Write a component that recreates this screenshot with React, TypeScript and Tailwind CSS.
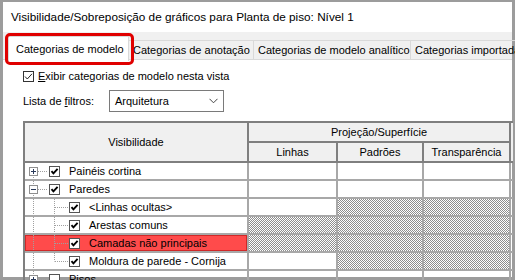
const font = "font-['Segoe_UI','Liberation_Sans',Arial,sans-serif]"

const hatch =
  "bg-[repeating-conic-gradient(#8e8e8e_0%_25%,#ffffff_0%_50%)] bg-[length:2px_2px]"

type Row = {
  label: string
  level: 0 | 1
  expander?: "+" | "-"
  checked: boolean
  hatch: [boolean, boolean, boolean]
  red?: boolean
  lastChild?: boolean
  first?: boolean
}

const rows: Row[] = [
  { label: "Painéis cortina", level: 0, expander: "+", checked: true, hatch: [false, false, false], first: true },
  { label: "Paredes", level: 0, expander: "-", checked: true, hatch: [false, false, false] },
  { label: "<Linhas ocultas>", level: 1, checked: true, hatch: [false, true, true] },
  { label: "Arestas comuns", level: 1, checked: true, hatch: [true, true, true] },
  { label: "Camadas não principais", level: 1, checked: true, hatch: [true, true, true], red: true },
  { label: "Moldura de parede - Cornija", level: 1, checked: true, hatch: [false, true, true], lastChild: true },
  { label: "Pisos", level: 0, expander: "+", checked: false, hatch: [false, false, false] },
]

const TreeCheck = ({ checked }: { checked: boolean }) => (
  <svg width="11" height="11" viewBox="0 0 11 11" className="shrink-0">
    <rect x="0.5" y="0.5" width="10" height="10" fill="#fff" stroke="#555" />
    {checked && (
      <path d="M2.5 5.2 L4.4 7.3 L8.6 2.8" fill="none" stroke="#000" strokeWidth="1.9" />
    )}
  </svg>
)

const TreeLines = ({ row }: { row: Row }) => {
  const dot = { stroke: "#a0a0a0", strokeDasharray: "1 1" }
  if (row.level === 0) {
    return (
      <svg width="24" height="16" viewBox="0 0 24 16" className="shrink-0">
        <line x1="8.5" y1={row.first ? 8 : 0} x2="8.5" y2="16" {...dot} />
        <line x1="13" y1="8.5" x2="23" y2="8.5" {...dot} />
        <rect x="4.5" y="4.5" width="8" height="8" fill="#fff" stroke="#8f8f8f" />
        <line x1="6" y1="8.5" x2="11" y2="8.5" stroke="#2a3a5a" />
        {row.expander === "+" && <line x1="8.5" y1="6" x2="8.5" y2="11" stroke="#2a3a5a" />}
      </svg>
    )
  }
  return (
    <svg width="44" height="16" viewBox="0 0 44 16" className="shrink-0">
      <line x1="8.5" y1="0" x2="8.5" y2="16" {...dot} />
      <line x1="29.5" y1="0" x2="29.5" y2={row.lastChild ? 8.5 : 16} {...dot} />
      <line x1="30" y1="8.5" x2="43" y2="8.5" {...dot} />
    </svg>
  )
}

const tabs = [
  { label: "Categorias de anotação", w: "w-[125px]" },
  { label: "Categorias de modelo analítico", w: "w-[157px]" },
  { label: "Categorias importadas", w: "w-[120px]" },
]

const cellW = ["w-[89px]", "w-[86px]", "w-[87px]"]

export default function App() {
  return (
    <div className={`w-[515px] h-[280px] overflow-hidden bg-white text-black text-[11px] ${font}`}>
      <div className="h-full border-[3px] border-t-2 border-[#9c9c9c] flex flex-col">
        {/* title */}
        <div className="h-[30px] shrink-0 flex items-center pl-2 text-[11.75px] whitespace-nowrap">
          Visibilidade/Sobreposição de gráficos para Planta de piso: Nível 1
        </div>

        {/* tab strip */}
        <div className="h-[28px] shrink-0 bg-[#f0f0f0] flex items-end pl-[5px] border-b border-[#dadada]">
          <div className="relative shrink-0 h-[25px] w-[121px] -mb-[2px] bg-white border border-b-0 border-[#d9d9d9] flex items-center pl-[7px] z-10 whitespace-nowrap">
            Categorias de modelo
            <div className="absolute -left-[4px] -top-[4px] w-[129px] h-[32px] border-[3px] border-[#e00000] rounded-[5px]" />
          </div>
          {tabs.map((t) => (
            <div
              key={t.label}
              className={`${t.w} shrink-0 h-[19px] flex items-center pl-[4px] border-t border-r border-[#d9d9d9] whitespace-nowrap`}
            >
              {t.label}
            </div>
          ))}
        </div>

        {/* content */}
        <div className="flex-1 pl-[20px] pt-[9px] flex flex-col">
          <div className="h-[14px] flex items-center gap-[4px]">
            <svg width="11" height="11" viewBox="0 0 11 11">
              <rect x="0.5" y="0.5" width="10" height="10" fill="#fff" stroke="#333" />
              <path d="M2 5.5 L4.3 8 L9 2.8" fill="none" stroke="#222" strokeWidth="1" />
            </svg>
            <span>
              <span className="underline">E</span>xibir categorias de modelo nesta vista
            </span>
          </div>

          <div className="mt-[7px] h-[22px] flex items-center">
            <span className="w-[86px]">
              Lista de <span className="underline">f</span>iltros:
            </span>
            <div className="w-[115px] h-[22px] border border-[#7a7a7a] flex items-center justify-between px-[5px]">
              <span>Arquitetura</span>
              <svg width="9" height="6" viewBox="0 0 9 6">
                <path d="M0.5 0.8 L4.5 4.8 L8.5 0.8" fill="none" stroke="#444" strokeWidth="1" />
              </svg>
            </div>
          </div>

          {/* table */}
          <div className="mt-[9px] w-[490px] border-l-2 border-t-2 border-[#7f7f7f]">
            <div className="flex h-[40px] bg-[#f0f0f0] border-b-2 border-[#7f7f7f]">
              <div className="w-[224px] border-r-2 border-[#7f7f7f] flex items-center justify-center">
                Visibilidade
              </div>
              <div className="flex flex-col">
                <div className="h-[20px] w-[262px] border-b-2 border-r-2 border-[#7f7f7f] flex items-center justify-center">
                  Projeção/Superfície
                </div>
                <div className="flex-1 flex">
                  {["Linhas", "Padrões", "Transparência"].map((h, i) => (
                    <div key={h} className={`${cellW[i]} border-r-2 border-[#7f7f7f] flex items-center justify-center`}>
                      {h}
                    </div>
                  ))}
                </div>
              </div>
            </div>

            {rows.map((r) => (
              <div key={r.label} className="flex h-[18px] border-b-2 border-[#a8a8a8]">
                <div
                  className={`w-[224px] border-r-2 border-[#a8a8a8] flex items-center ${
                    r.red ? "bg-[#ff4b4b] shadow-[inset_0_0_0_1px_#d02828]" : ""
                  }`}
                >
                  <TreeLines row={r} />
                  <TreeCheck checked={r.checked} />
                  <span className="ml-[9px] whitespace-nowrap">{r.label}</span>
                </div>
                {r.hatch.map((h, i) => (
                  <div key={i} className={`${cellW[i]} border-r-2 border-[#a8a8a8] ${h ? hatch : ""}`} />
                ))}
              </div>
            ))}
          </div>
        </div>
      </div>
    </div>
  )
}
